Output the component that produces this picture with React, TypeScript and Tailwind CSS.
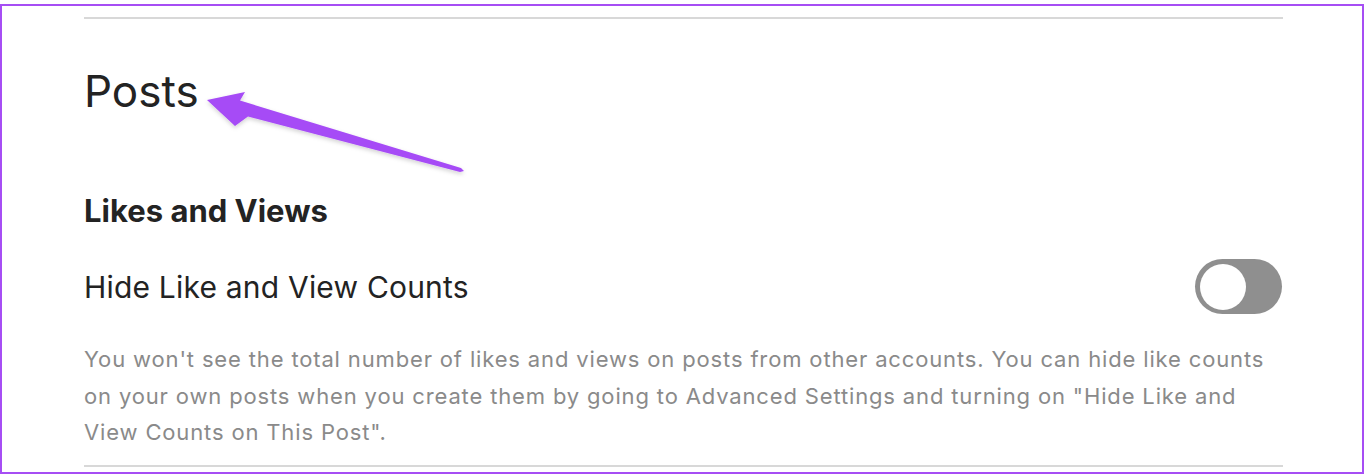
import React from 'react';

const Toggle = () => (
  <div className="flex h-[55px] w-[87px] items-center rounded-full bg-[#8f8f8f] pl-[5px]">
    <div className="h-[46px] w-[46px] rounded-full bg-white" />
  </div>
);

const Arrow = () => (
  <svg
    className="pointer-events-none absolute left-0 top-0"
    width="1366"
    height="476"
    viewBox="0 0 1366 476"
  >
    <defs>
      <filter id="arrowShadow" x="-10%" y="-20%" width="120%" height="160%">
        <feDropShadow dx="0" dy="2" stdDeviation="2" floodColor="#000" floodOpacity="0.18" />
      </filter>
    </defs>
    <polygon
      points="207,100 245,92 240,100.5 461,168 464,171 460,172 248,116.5 235,126"
      fill="#a64cf6"
      filter="url(#arrowShadow)"
    />
  </svg>
);

export default function App() {
  return (
    <div className="relative h-[476px] w-[1366px] bg-white pt-[4px] font-['Inter',sans-serif]">
      <div className="flex h-[470px] w-[1364px] flex-col border-2 border-[#a64ef4] pl-[82px]">
        <div className="mt-[11px] h-[2px] w-[1199px] bg-[#d8d8d8]" />

        <h1 className="mt-[44px] text-[44px] leading-[56px] font-normal text-[#232323]">Posts</h1>

        <h2 className="mt-[72px] text-[31px] leading-[40px] font-bold text-[#232323]">Likes and Views</h2>

        <div className="mt-[28px] flex h-[55px] w-[1199px] items-center justify-between pr-[1px]">
          <span className="text-[30px] leading-[44px] tracking-[0.2px] text-[#232323]">
            Hide Like and View Counts
          </span>
          <Toggle />
        </div>

        <p className="mt-[27px] h-[109.5px] whitespace-nowrap text-[22px] leading-[36.5px] tracking-[0.85px] text-[#8a8a8a]">
          You won't see the total number of likes and views on posts from other accounts. You can hide like counts
          <br />
          on your own posts when you create them by going to Advanced Settings and turning on "Hide Like and
          <br />
          View Counts on This Post".
        </p>

        <div className="mt-[14.5px] h-[2px] w-[1199px] bg-[#d8d8d8]" />
      </div>
      <Arrow />
    </div>
  );
}
